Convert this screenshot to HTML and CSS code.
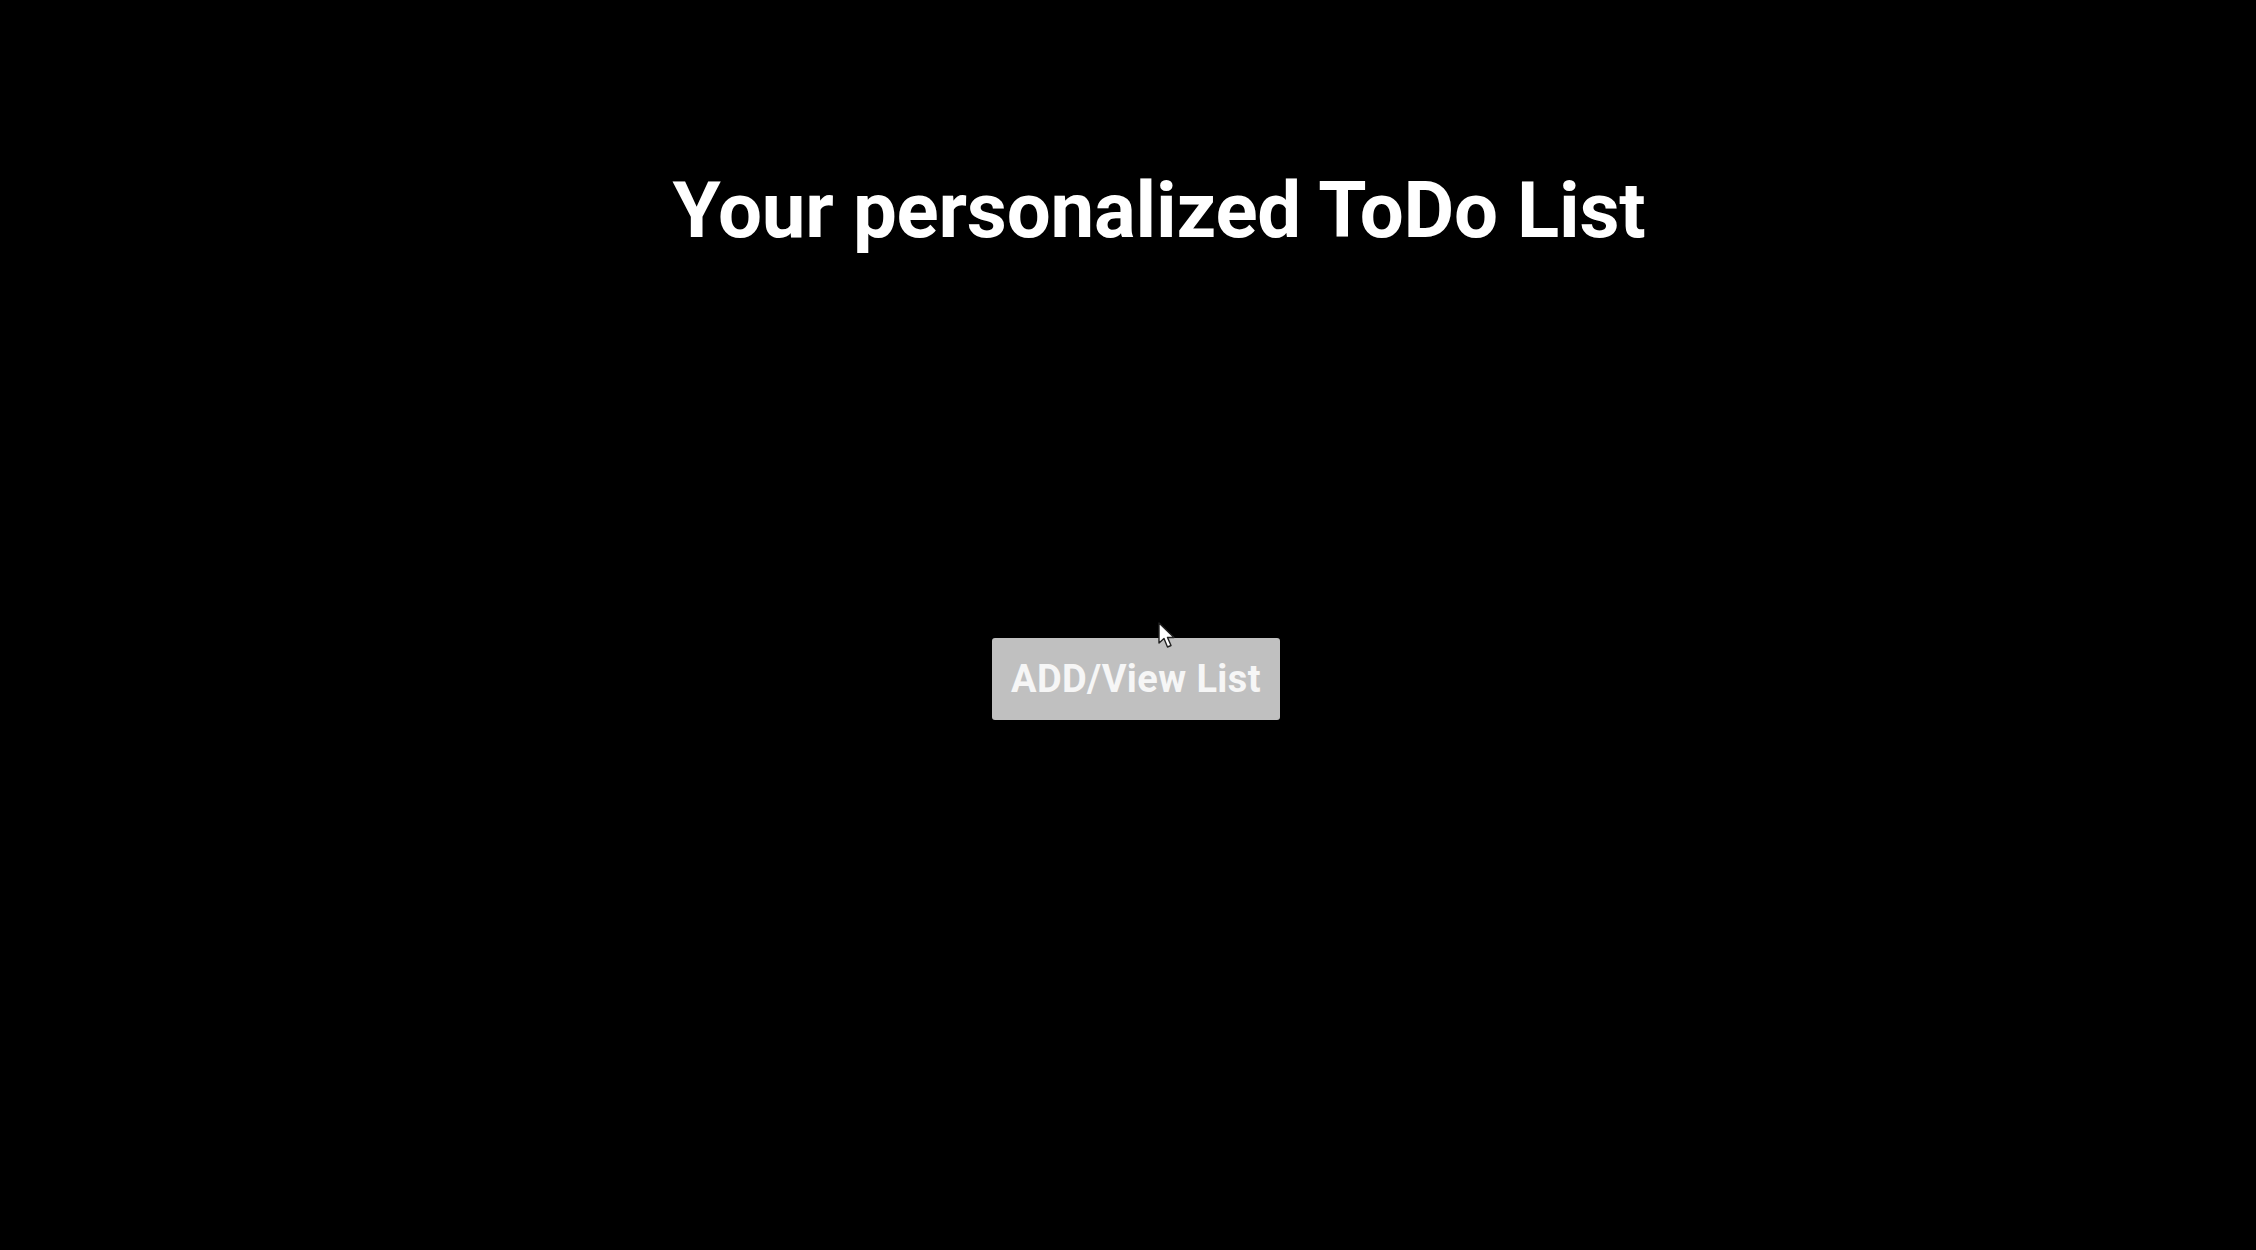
FILE: index.html
```html
<!DOCTYPE html>
<html lang="en">
<head>
<meta charset="utf-8">
<title>ToDo</title>
<link rel="stylesheet" href="styles.css">
</head>
<body>
<main class="page">
  <h1 class="title">Your personalized ToDo List</h1>
  <div class="action">
    <button class="btn" type="button">ADD/View List</button>
    <svg class="cursor" width="20" height="28" viewBox="0 0 20 28" aria-hidden="true">
      <path d="M1 1 L1 21 L6 16.5 L9.5 25 L13 23.5 L9.5 15.5 L16 15.5 Z" fill="#fff" stroke="#222" stroke-width="1.4" stroke-linejoin="round"/>
    </svg>
  </div>
</main>
</body>
</html>
```
FILE: styles.css
```css
html, body {
  margin: 0;
  padding: 0;
  background: #000;
}
body {
  width: 2256px;
  height: 1250px;
  overflow: hidden;
  font-family: Roboto, "Liberation Sans", sans-serif;
}
.page {
  display: flex;
  flex-direction: column;
  align-items: center;
  padding-top: 171px;
}
.title {
  margin: 0 0 0 62px;
  font-size: 78px;
  line-height: 80px;
  font-weight: 700;
  color: #fff;
  letter-spacing: -0.2px;
}
.action {
  position: relative;
  margin-top: 387px;
  margin-left: 16px;
}
.btn {
  display: block;
  width: 288px;
  height: 82px;
  border: none;
  border-radius: 3px;
  background: #c0c0c0;
  color: #f6f6f6;
  font-family: Roboto, "Liberation Sans", sans-serif;
  font-size: 38px;
  font-weight: 700;
  letter-spacing: 0.4px;
  padding: 0;
}
.cursor {
  position: absolute;
  left: 166px;
  top: -16px;
}
```
